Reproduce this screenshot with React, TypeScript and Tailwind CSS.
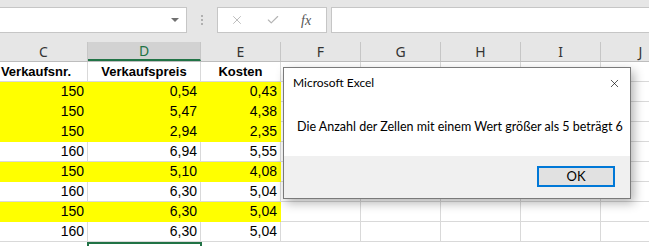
import { X, Check } from 'lucide-react';

const cols = [
  { key: 'C', w: 'w-[88px]' },
  { key: 'D', w: 'w-[113px]' },
  { key: 'E', w: 'w-[80px]' },
  { key: 'F', w: 'w-[80px]' },
  { key: 'G', w: 'w-[80px]' },
  { key: 'H', w: 'w-[80px]' },
  { key: 'I', w: 'w-[80px]' },
  { key: 'J', w: 'w-[80px]' },
];

const rows = [
  { nr: '150', preis: '0,54', kosten: '0,43', hit: true },
  { nr: '150', preis: '5,47', kosten: '4,38', hit: true },
  { nr: '150', preis: '2,94', kosten: '2,35', hit: true },
  { nr: '160', preis: '6,94', kosten: '5,55', hit: false },
  { nr: '150', preis: '5,10', kosten: '4,08', hit: true },
  { nr: '160', preis: '6,30', kosten: '5,04', hit: false },
  { nr: '150', preis: '6,30', kosten: '5,04', hit: true },
  { nr: '160', preis: '6,30', kosten: '5,04', hit: false },
];

function Cell({ w, children, yellow, bold, align = 'right' }: { w: string; children?: React.ReactNode; yellow?: boolean; bold?: boolean; align?: 'right' | 'center' }) {
  return (
    <div
      className={`${w} shrink-0 h-[20px] flex items-center border-r border-b overflow-visible whitespace-nowrap ${
        yellow ? 'bg-[#ffff00] border-[#ffff00]' : 'bg-white border-[#d9d9d9]'
      } ${align === 'right' ? 'justify-end pr-[3px]' : 'justify-center'} ${bold ? 'font-bold text-[13px]' : 'text-[14px]'}`}
    >
      {children}
    </div>
  );
}

function EmptyCells() {
  return (
    <>
      {cols.slice(3).map(c => (
        <Cell key={c.key} w={c.w} />
      ))}
    </>
  );
}

export default function App() {
  return (
    <div className="w-[649px] h-[246px] overflow-hidden relative bg-white text-black font-['Liberation_Sans',Arial,sans-serif]">
      {/* Formula bar */}
      <div className="h-[42px] bg-[#e6e6e6] flex items-start pt-[7px]">
        <div className="w-[188px] h-[26px] -ml-[1px] bg-white border border-[#c6c6c6] flex items-center justify-end pr-[7px]">
          <div className="w-0 h-0 border-l-[4px] border-r-[4px] border-t-[4px] border-l-transparent border-r-transparent border-t-[#707070]" />
        </div>
        <div className="w-[30px] h-[26px] flex flex-col items-center justify-center gap-[2px]">
          <span className="w-[2px] h-[2px] bg-[#b0b0b0]" />
          <span className="w-[2px] h-[2px] bg-[#b0b0b0]" />
          <span className="w-[2px] h-[2px] bg-[#b0b0b0]" />
        </div>
        <div className="w-[110px] h-[26px] bg-white border border-[#c6c6c6] flex items-center">
          <X className="w-[14px] h-[14px] text-[#b4b4b4] ml-[12px]" strokeWidth={1.5} />
          <Check className="w-[14px] h-[14px] text-[#b4b4b4] ml-[22px]" strokeWidth={2} />
          <span className="ml-[21px] text-[14px] italic text-[#555] font-['Liberation_Serif',serif]">fx</span>
        </div>
        <div className="flex-1 h-[26px] ml-[4px] bg-white border border-[#c6c6c6] border-r-0" />
      </div>

      {/* Column headers */}
      <div className="flex h-[20px] bg-[#e6e6e6] border-b border-[#bdbdbd]">
        {cols.map(c => (
          <div
            key={c.key}
            className={`${c.w} shrink-0 flex items-center justify-center text-[14px] font-['Noto_Sans',sans-serif] border-r border-[#c6c6c6] ${
              c.key === 'D' ? 'bg-[#d2d2d2] text-[#217346] border-b-2 border-b-[#217346]' : 'text-[#333]'
            }`}
          >
            {c.key}
          </div>
        ))}
      </div>

      {/* Header row */}
      <div className="flex">
        <Cell w="w-[88px]" bold>
          <span className="-ml-[2px] pr-[13px]">Verkaufsnr.</span>
        </Cell>
        <Cell w="w-[113px]" bold align="center">Verkaufspreis</Cell>
        <Cell w="w-[80px]" bold align="center">Kosten</Cell>
        <EmptyCells />
      </div>

      {/* Data rows */}
      {rows.map((r, i) => (
        <div key={i} className="flex">
          <Cell w="w-[88px]" yellow={r.hit}>{r.nr}</Cell>
          <Cell w="w-[113px]" yellow={r.hit}>{r.preis}</Cell>
          <Cell w="w-[80px]" yellow={r.hit}>{r.kosten}</Cell>
          <EmptyCells />
        </div>
      ))}

      {/* Selection box */}
      <div className="flex">
        <div className="w-[87px] shrink-0" />
        <div className="w-[115px] h-[10px] border-2 border-[#217346]" />
      </div>

      {/* Message box */}
      <div className="absolute left-[283px] top-[67px] w-[348px] h-[132px] bg-white border border-[#7a7a7a] shadow-[3px_4px_10px_rgba(0,0,0,0.3)] flex flex-col font-['Lato',sans-serif] text-[12.5px]">
        <div className="h-[30px] flex items-center justify-between pl-[9px] pr-[9px]">
          <span className="text-[12px]">Microsoft Excel</span>
          <X className="w-[13px] h-[13px] text-black" strokeWidth={1.2} />
        </div>
        <div className="h-[58px] flex items-center pl-[13px] whitespace-nowrap">
          Die Anzahl der Zellen mit einem Wert größer als 5 beträgt 6
        </div>
        <div className="flex-1 bg-[#f0f0f0] flex items-start justify-end pt-[10px] pr-[15px]">
          <button className="w-[78px] h-[21px] border-2 border-[#0078d7] bg-[#e1e1e1] flex items-center justify-center text-[13px]">
            OK
          </button>
        </div>
      </div>
    </div>
  );
}
